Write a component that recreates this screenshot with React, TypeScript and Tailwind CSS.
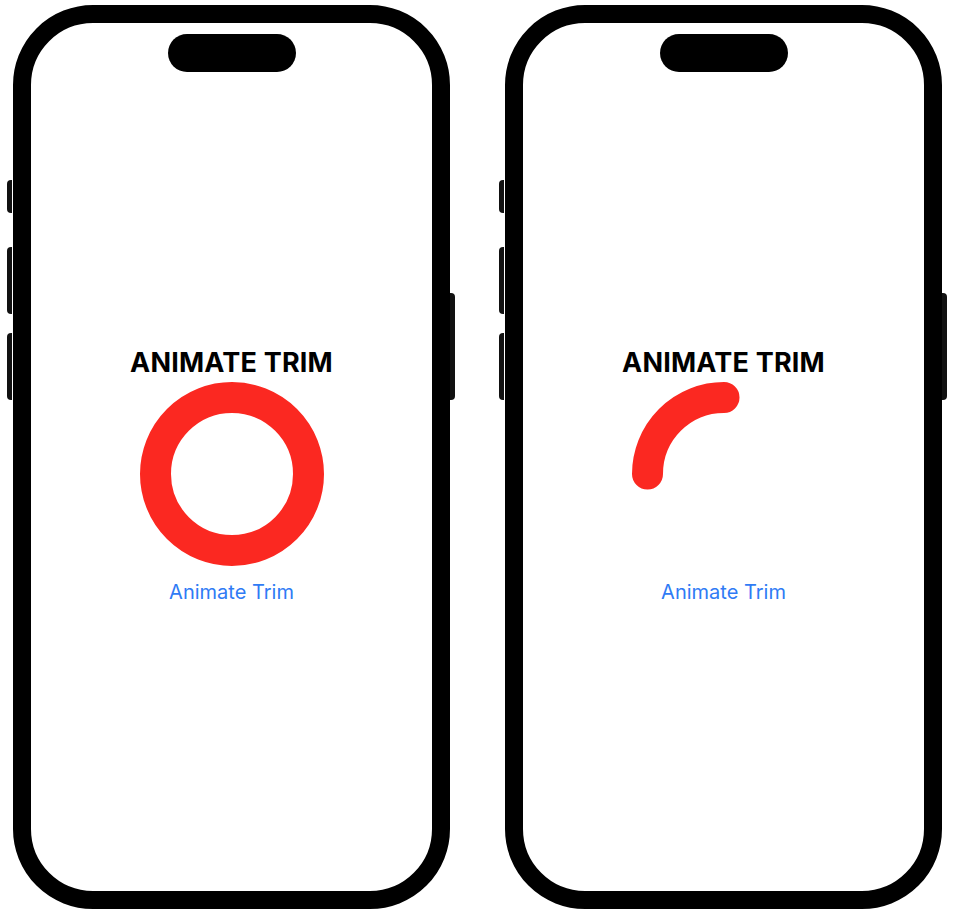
import React from 'react';

type PhoneProps = {
  children: React.ReactNode;
};

const Phone: React.FC<PhoneProps> = ({ children }) => {
  return (
    <div className="relative w-[437px] h-[904px] shrink-0">
      {/* side buttons */}
      <div className="absolute left-[-6px] top-[175px] w-[5px] h-[33px] rounded-l-sm bg-[#111]" />
      <div className="absolute left-[-6px] top-[242px] w-[5px] h-[67px] rounded-l-sm bg-[#111]" />
      <div className="absolute left-[-6px] top-[328px] w-[5px] h-[67px] rounded-l-sm bg-[#111]" />
      <div className="absolute right-[-5px] top-[288px] w-[5px] h-[107px] rounded-r-sm bg-[#111]" />

      <div className="w-full h-full rounded-[80px] border-[18px] border-black bg-white flex flex-col items-center overflow-hidden">
        <div className="mt-[11px] w-[128px] h-[38px] rounded-full bg-black" />
        {children}
      </div>
    </div>
  );
};

const Screen: React.FC<{ full: boolean }> = ({ full }) => {
  return (
    <div className="flex flex-col items-center mt-[275px]">
      <h1 className="text-[27px] leading-[32px] font-bold text-black tracking-[0.2px]">ANIMATE TRIM</h1>
      <svg width="184" height="184" viewBox="0 0 184 184" className="mt-[3px]">
        {full ? (
          <circle cx="92" cy="92" r="76.5" fill="none" stroke="#fb2821" strokeWidth="31" />
        ) : (
          <path
            d="M15.5 92 A76.5 76.5 0 0 1 92 15.5"
            fill="none"
            stroke="#fb2821"
            strokeWidth="31"
            strokeLinecap="round"
          />
        )}
      </svg>
      <button className="mt-[12px] text-[20px] leading-[28px] text-[#2f7bf5]">Animate Trim</button>
    </div>
  );
};

export default function App() {
  return (
    <div
      className="w-[953px] h-[916px] bg-white flex gap-[55px] pl-[13px] pt-[5px]"
      style={{ fontFamily: 'Inter, "Noto Sans", sans-serif' }}
    >
      <Phone>
        <Screen full />
      </Phone>
      <Phone>
        <Screen full={false} />
      </Phone>
    </div>
  );
}
